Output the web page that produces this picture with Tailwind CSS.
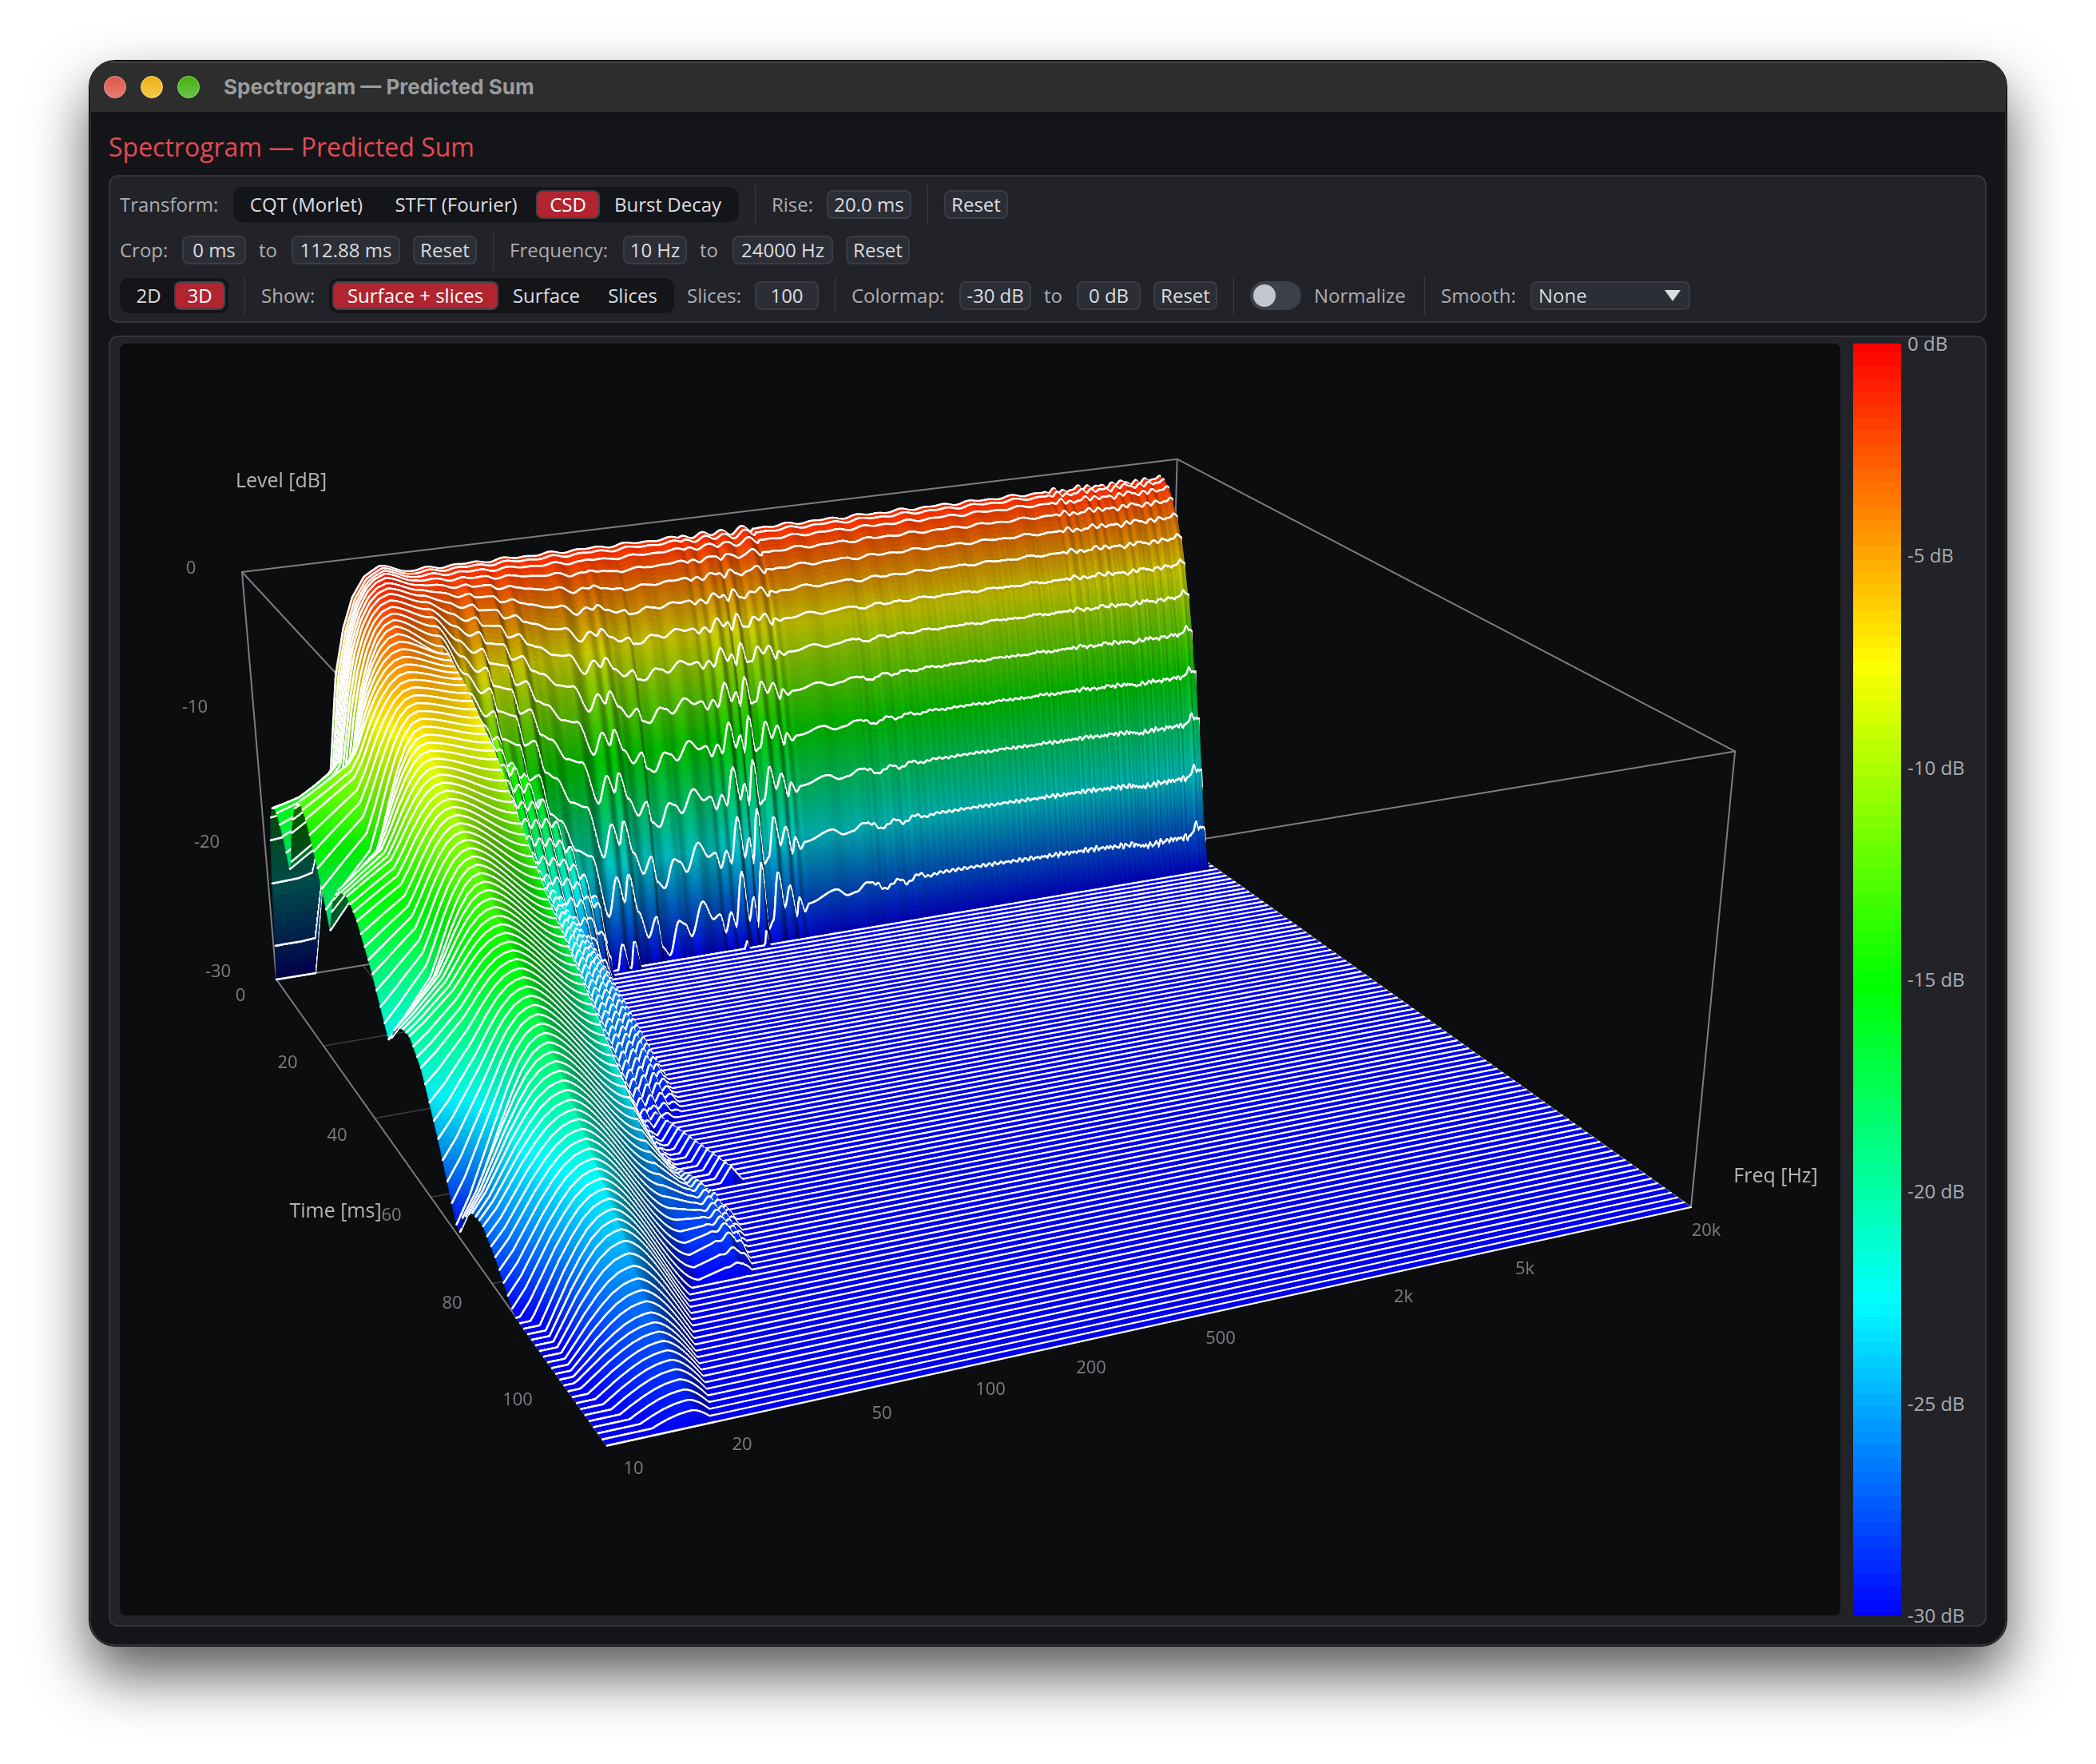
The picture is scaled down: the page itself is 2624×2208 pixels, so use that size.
<!DOCTYPE html>
<html lang="en">
<head>
  <meta charset="UTF-8" />
  <meta name="viewport" content="width=device-width, initial-scale=1.0" />
  <title>Spectrogram — Predicted Sum</title>
  <script src="https://cdn.jsdelivr.net/npm/@tailwindcss/browser@4"></script>
</head>
<body class="bg-white">

  <div class="flex flex-col h-screen px-[112px] pt-[76px] pb-[148px] font-['Open_Sans','Noto_Sans',sans-serif] text-[24px] leading-[32px] text-[#acadb1]">
    <!-- Window -->
    <div class="flex-1 min-h-0 flex flex-col rounded-[32px] overflow-hidden bg-[#141519] border-2 border-[#2e2f32] outline outline-1 outline-black shadow-[0_36px_72px_rgba(0,0,0,0.66)]">

      <!-- Title bar -->
      <div class="h-[62px] shrink-0 bg-[#2d2d2d] border-t border-[#454745] flex items-center pl-4 pb-[2px]">
        <div class="flex gap-[18px]">
          <button aria-label="Close" class="size-7 rounded-full bg-linear-to-b from-[#e0574a] to-[#e47a70] border border-[#f0a098]"></button>
          <button aria-label="Minimize" class="size-7 rounded-full bg-linear-to-b from-[#f0b100] to-[#f3c94a] border border-[#ffe27a]"></button>
          <button aria-label="Zoom" class="size-7 rounded-full bg-linear-to-b from-[#45b000] to-[#6cc346] border border-[#8fe070]"></button>
        </div>
        <div class="ml-[30px] font-['Inter'] font-bold text-[26px] text-[#9c9c9c]">Spectrogram — Predicted Sum</div>
      </div>

      <div class="flex-1 min-h-0 flex flex-col pl-[22px] pr-[23px] pb-[22px]">
        <h1 class="h-[79px] shrink-0 pt-5 text-[32px] leading-[48px] text-[#e24b55]">Spectrogram — Predicted Sum</h1>

        <!-- Controls -->
        <div class="shrink-0 flex flex-col gap-2 rounded-xl border-2 border-[#34353c] bg-[#222328] px-3 pt-[10px] pb-2">
          <div class="flex items-center gap-4 h-[49px]">
            <span class="w-[126px] whitespace-nowrap">Transform:</span>
            <div class="flex items-center h-11 p-1 rounded-[12px] bg-[#141519] text-[#dcdde0]">
              <button class="w-[175px] h-9 whitespace-nowrap">CQT (Morlet)</button>
              <button class="w-[200px] h-9 whitespace-nowrap">STFT (Fourier)</button>
              <button class="w-20 h-9 whitespace-nowrap rounded-lg border-2 border-[#3f424b] bg-[#b0252f] text-white leading-[30px]">CSD</button>
              <button class="w-[170px] h-9 whitespace-nowrap">Burst Decay</button>
            </div>
            <div class="w-px h-12 mx-1 bg-[#3a3b43]"></div>
            <label for="rise" class="w-[53px] whitespace-nowrap">Rise:</label>
            <input id="rise" type="text" value="20.0 ms" class="w-[106px] h-9 rounded-lg border-2 border-[#3a3c45] bg-[#2c2e36] text-center text-[#dcdde0]" />
            <div class="w-px h-12 mx-1 bg-[#3a3b43]"></div>
            <button class="w-20 h-9 rounded-lg border-2 border-[#3a3c45] bg-[#2c2e36] text-[#dcdde0] leading-[30px]">Reset</button>
          </div>

          <div class="flex items-center gap-4 h-[49px]">
            <label for="crop-from" class="w-[62px] whitespace-nowrap">Crop:</label>
            <input id="crop-from" type="text" value="0 ms" class="w-20 h-9 rounded-lg border-2 border-[#3a3c45] bg-[#2c2e36] text-center text-[#dcdde0]" />
            <label for="crop-to" class="w-[25px]">to</label>
            <input id="crop-to" type="text" value="112.88 ms" class="w-[136px] h-9 rounded-lg border-2 border-[#3a3c45] bg-[#2c2e36] text-center text-[#dcdde0]" />
            <button class="w-20 h-9 rounded-lg border-2 border-[#3a3c45] bg-[#2c2e36] text-[#dcdde0] leading-[30px]">Reset</button>
            <div class="w-px h-12 mx-1 bg-[#3a3b43]"></div>
            <label for="freq-from" class="w-[126px] whitespace-nowrap">Frequency:</label>
            <input id="freq-from" type="text" value="10 Hz" class="w-20 h-9 rounded-lg border-2 border-[#3a3c45] bg-[#2c2e36] text-center text-[#dcdde0]" />
            <label for="freq-to" class="w-[25px]">to</label>
            <input id="freq-to" type="text" value="24000 Hz" class="w-[126px] h-9 rounded-lg border-2 border-[#3a3c45] bg-[#2c2e36] text-center text-[#dcdde0]" />
            <button class="w-20 h-9 rounded-lg border-2 border-[#3a3c45] bg-[#2c2e36] text-[#dcdde0] leading-[30px]">Reset</button>
          </div>

          <div class="flex items-center gap-4 h-[49px]">
            <div class="flex items-center h-11 p-1 rounded-[12px] bg-[#141519] text-[#dcdde0]">
              <button class="w-16 h-9">2D</button>
              <button class="w-16 h-9 rounded-lg border-2 border-[#3f424b] bg-[#b0252f] text-white leading-[30px]">3D</button>
            </div>
            <div class="w-px h-12 mx-1 bg-[#3a3b43]"></div>
            <span class="w-[69px] whitespace-nowrap">Show:</span>
            <div class="flex items-center h-11 p-1 rounded-[12px] bg-[#141519] text-[#dcdde0]">
              <button class="w-[208px] h-9 whitespace-nowrap rounded-lg border-2 border-[#3f424b] bg-[#b0252f] text-white leading-[30px]">Surface + slices</button>
              <button class="w-[120px] h-9">Surface</button>
              <button class="w-24 h-9">Slices</button>
            </div>
            <label for="slices" class="w-[69px] whitespace-nowrap">Slices:</label>
            <input id="slices" type="text" value="100" class="w-20 h-9 rounded-lg border-2 border-[#3a3c45] bg-[#2c2e36] text-center text-[#dcdde0]" />
            <div class="w-px h-12 mx-1 bg-[#3a3b43]"></div>
            <label for="map-from" class="w-[119px] whitespace-nowrap">Colormap:</label>
            <input id="map-from" type="text" value="-30 dB" class="w-[90px] h-9 rounded-lg border-2 border-[#3a3c45] bg-[#2c2e36] text-center text-[#dcdde0]" />
            <label for="map-to" class="w-[25px]">to</label>
            <input id="map-to" type="text" value="0 dB" class="w-20 h-9 rounded-lg border-2 border-[#3a3c45] bg-[#2c2e36] text-center text-[#dcdde0]" />
            <button class="w-20 h-9 rounded-lg border-2 border-[#3a3c45] bg-[#2c2e36] text-[#dcdde0] leading-[30px]">Reset</button>
            <div class="w-px h-12 mx-1 bg-[#3a3b43]"></div>
            <input id="normalize" type="checkbox" class="appearance-none relative w-16 h-9 rounded-full bg-[#3c4048] before:absolute before:left-1 before:top-1 before:size-7 before:rounded-full before:bg-[#c3c6d0]" />
            <label for="normalize" class="w-[118px] whitespace-nowrap">Normalize</label>
            <div class="w-px h-12 mx-1 bg-[#3a3b43]"></div>
            <label for="smooth" class="w-[96px] whitespace-nowrap">Smooth:</label>
            <div class="relative w-[200px] h-9">
              <select id="smooth" class="appearance-none w-full h-9 pl-2 rounded-lg border-2 border-[#3a3c45] bg-[#2c2e36] text-[#dcdde0] leading-[30px]">
                <option>None</option>
              </select>
              <svg class="absolute right-3 top-[11px] w-5 h-[14px] pointer-events-none" viewBox="0 0 20 14"><path d="M0 0H20L10 14Z" fill="#dcdde0" /></svg>
            </div>
          </div>
        </div>

        <!-- Plot -->
        <div class="flex-1 min-h-0 mt-4 flex rounded-xl border-2 border-[#34353c] bg-[#222328] pl-3 pt-2 pb-3 pr-[13px]">
          <div class="relative flex-1 rounded-lg overflow-hidden bg-[#0c0d0f]">
            <canvas id="plot" width="2154" height="1592" class="block absolute inset-0 w-full h-full"></canvas>
            <svg class="absolute inset-0 w-full h-full" viewBox="0 0 2154 1592" preserveAspectRatio="none" text-anchor="middle">
              <g fill="#7c7d83" font-size="22">
                <text x="89" y="288">0</text>
                <text x="94" y="462">-10</text>
                <text x="109" y="631">-20</text>
                <text x="123" y="793">-30</text>
                <text x="151" y="823">0</text>
                <text x="210" y="907">20</text>
                <text x="272" y="998">40</text>
                <text x="340" y="1098">60</text>
                <text x="416" y="1208">80</text>
                <text x="498" y="1329">100</text>
                <text x="643" y="1415">10</text>
                <text x="779" y="1385">20</text>
                <text x="954" y="1346">50</text>
                <text x="1090" y="1316">100</text>
                <text x="1216" y="1289">200</text>
                <text x="1378" y="1252">500</text>
                <text x="1607" y="1200">2k</text>
                <text x="1759" y="1165">5k</text>
                <text x="1986" y="1117">20k</text>
              </g>
              <g fill="#b4b5b9" font-size="25">
                <text x="202" y="180">Level [dB]</text>
                <text x="270" y="1094">Time [ms]</text>
                <text x="2073" y="1050">Freq [Hz]</text>
              </g>
            </svg>
          </div>

          <!-- Color bar -->
          <canvas id="bar" width="60" height="1592" class="ml-4 w-[60px] h-full"></canvas>
          <div class="ml-2 w-[84px] flex flex-col justify-between whitespace-nowrap">
            <div class="h-0 flex items-center">0 dB</div>
            <div class="h-0 flex items-center">-5 dB</div>
            <div class="h-0 flex items-center">-10 dB</div>
            <div class="h-0 flex items-center">-15 dB</div>
            <div class="h-0 flex items-center">-20 dB</div>
            <div class="h-0 flex items-center">-25 dB</div>
            <div class="h-0 flex items-center">-30 dB</div>
          </div>
        </div>
      </div>
    </div>
  </div>

  <script>
    // value table lookup, linear between the points or eased when smooth is set
    function lut(tab, x, smooth) {
      if (x <= tab[0][0]) return tab[0][1];
      for (let i = 1; i < tab.length; i++) {
        if (x <= tab[i][0]) {
          const a = tab[i - 1], b = tab[i];
          let w = (x - a[0]) / (b[0] - a[0]);
          if (smooth) w = w * w * (3 - 2 * w);
          return a[1] + (b[1] - a[1]) * w;
        }
      }
      return tab[tab.length - 1][1];
    }

    // h: 0 = -30 dB, 1 = 0 dB
    function color(h, s) {
      const v = Math.max(0, Math.min(1, h)) * 4;
      let r = 0, g = 0, b = 0;
      if (v < 1) { g = v; b = 1; }
      else if (v < 2) { g = 1; b = 2 - v; }
      else if (v < 3) { g = 1; r = v - 2; }
      else { r = 1; g = 4 - v; }
      s *= 255;
      return `rgb(${r * s | 0},${g * s | 0},${b * s | 0})`;
    }

    // level at 10 Hz over time
    const EDGE = [[0,.48],[.0585,.48],[.08,.43],[.102,.35],[.115,.46],[.135,.54],[.159,.578],[.18,.55],[.21,.46],[.241,.3385],
      [.255,.42],[.28,.47],[.311,.485],[.34,.46],[.38,.38],[.4276,.25],[.45,.31],[.475,.33],[.4977,.3345],[.53,.29],[.57,.17],[.616,0],
      [.63,.06],[.66,.105],[.688,.114],[.72,.08],[.769,0],[.8,-.06],[.85,-.04],[.9,-.01],[.95,-.03],[1,-.05]];
    // main resonance
    const CREST_F = [[0,.136],[.1,.117],[.27,.096],[.53,.09],[.77,.081],[1,.074]];
    const CREST_H = [[0,.975],[.03,.975],[.06,.955],[.27,.75],[.5256,.5],[.767,.25],[.82,.195],[.86,.135],[.89,.1],[.95,.055],[.99,.02],[1,0]];
    const G_EARLY = [[0,0],[.2,0],[.53,.09],[.63,.52],[.7,.73],[.78,.87],[.86,.95],[.93,.985],[1,1]];
    const G_MID = [[0,0],[.22,.15],[.45,.3],[.54,.45],[.65,.65],[.75,.81],[.84,.92],[.92,.98],[1,1]];
    const G_LATE = [[0,0],[.15,.16],[.3,.37],[.45,.58],[.6,.76],[.72,.88],[.84,.96],[.93,.99],[1,1]];
    const START = [[0,0],[.04,0],[.071,.5],[.083,.73],[.094,.84],[.105,.91],[.118,.955],[.133,.975]];
    const RISE = [[0,0],[.009,.2],[.018,.55],[.027,.79],[.036,.92],[.045,.98],[.0585,1]];

    // level of slice 12 over frequency
    const H12 = [[.16,.86],[.185,.74],[.2,.68],[.208,.69],[.215,.62],[.232,.6],[.24,.51],[.25,.52],[.26,.42],[.27,.4],[.285,.32],[.3,.3],[.316,.14],[.3255,.237],
      [.333,.17],[.338,.24],[.347,.14],[.357,.07],[.366,.12],[.371,.04],[.379,.015],[.39,.1],[.396,.09],[.403,.055],[.4159,.14],
      [.427,.09],[.434,.1],[.44,.05],[.4463,.1],[.4513,.06],[.4586,.2],[.466,.07],[.471,.13],[.475,.05],[.48,.215],[.487,.04],[.492,.06],[.498,.185],[.505,.09],
      [.511,.145],[.518,.06],[.521,.11],[.527,.07],[.532,.09],[.562,.115],[.575,.095],[.585,.1],[.596,.12],[.607,.113],[.616,.095],[.633,.115],[.641,.1],
      [.655,.12],[.665,.11],[.68,.115],[.7,.115],[.85,.11],[.9,.105],[.92,.095],[.95,.1],[.972,.1],[.978,.13],[.983,.12]];

    // decay after slice 12 between 50 and 100 Hz
    const TT = [.107,.18,.27,.4,.5,.6,.68,.75,.8,.9,1];
    const TAIL = [
      [.16, [.86,.81,.71,.5,.38,.25,.14,.04,-.04,-.15,-.22]],
      [.185,[.74,.6,.45,.28,.17,.1,.09,.06,-.03,-.15,-.2]],
      [.2,  [.68,.47,.33,.2,.08,.04,.09,.07,-.03,-.1,-.12]],
      [.215,[.62,.38,.26,.13,.01,.0,.04,.0,-.05,-.1,-.12]],
      [.25, [.52,.22,.17,.07,-.03,-.03,-.05,-.06,-.08,-.1,-.12]],
      [.275,[.38,.12,.06,-.01,-.02,-.04,-.05,-.06,-.08,-.1,-.12]],
      [.3,  [.3,-.2,-.3,-.3,-.3,-.3,-.3,-.3,-.3,-.3,-.3]],
      [.31, [.2,-.4,-.4,-.4,-.4,-.4,-.4,-.4,-.4,-.4,-.4]],
    ].map(([f, row]) => [f, row.map((v, i) => [TT[i], v])]);

    // the first slices lie a little closer together
    const STEP = .0089;
    function sliceTime(k) {
      return k <= 12 ? k * STEP : 12 * STEP + (k - 12) * (1 - 12 * STEP) / 87;
    }

    function wall(f, t) {
      const end = .98 + Math.min(1, t / .107) * .009;
      if (f > end + .003) return 0;
      if (f > end) return wall(end - .001, t) * (end + .003 - f) / .003;
      const hf = Math.max(0, (f - .66) / .34);
      const top = .956 + .002 * Math.sin(f * 150) + .002 * Math.sin(f * 251)
        + (f > .84 ? .006 * Math.sin(f * 560) * Math.sin(f * 97) : 0)
        + (f > .44 && f < .52 ? .006 * Math.sin(f * 300) : 0);
      const n = .003 * Math.sin(f * 900) * (f > .6 ? 1 : 0) + .009 * hf * Math.sin(f * 1270) * Math.sin(f * 210);
      let h = top - (top + .01 - lut(H12, f, true) - n) * Math.pow(t / STEP / 12, 2.2);
      if (f < .31 && t > .107) {
        let i = 1;
        while (i < TAIL.length - 1 && TAIL[i][0] < f) i++;
        const a = TAIL[i - 1], b = TAIL[i];
        const w = Math.max(0, (f - a[0]) / (b[0] - a[0]));
        const v = lut(a[1], t) * (1 - w) + lut(b[1], t) * w;
        const tail = v + Math.max(0, Math.min(.02, v * .4)) * Math.sin(f * 480 + t * 20) * Math.min(1, Math.max(0, (f - .18) / .04));
        const m = Math.min(1, (t - .107) / .02);
        h = h * (1 - m) + tail * m;
        // narrow late ridge
        if (t > .42 && t < .61) {
          const d = Math.abs(f - .22 - (t - .42) * .17) / .01;
          h = Math.max(h, .035 * (1 - d));
        }
      }
      return h;
    }

    function level(f, t) {
      const fc = lut(CREST_F, t), c = lut(CREST_H, t);
      let h;
      if (f < fc) {
        const u = f / fc, e = lut(EDGE, t);
        const m = Math.min(1, t / .2), m2 = Math.max(0, Math.min(1, (t - .35) / .3));
        const g = lut(G_EARLY, u) * (1 - m) + lut(G_MID, u) * m;
        h = e + (c - e) * (g * (1 - m2) + lut(G_LATE, u) * m2);
        if (t < .0585) {
          const r = lut(RISE, t);
          h = lut(START, f) * (1 - r) + h * r;
        }
      } else if (f < .16) {
        const v = (f - fc) / (.16 - fc);
        h = c + (wall(.16, t) - c) * (.8 * v * v * (3 - 2 * v) + .2 * v);
      } else {
        h = wall(f, t);
      }
      return Math.max(0, h);
    }

    // box coordinates (freq, time, level in 0..1) to plot pixels
    function project(f, t, h) {
      const w = 1 + .1025 * f - .228 * t - .0488 * h;
      return [
        (346 + 1264.6 * f + 240.7 * t - 57.8 * h) / w - 150,
        (1226 - 75.5 * f + 170.9 * t - 544.9 * h) / w - 430,
      ];
    }

    function shade(dhdf, dhdt) {
      const nx = -dhdf * .4, nz = -dhdt * .6;
      const len = Math.hypot(nx, 1, nz);
      const d = (-.45 * nx + .85 + .38 * nz) / len;
      return Math.max(.3, Math.min(1, .3 + .75 * d));
    }

    function drawPlot() {
      const ctx = document.getElementById("plot").getContext("2d");
      ctx.lineJoin = "round";
      ctx.lineCap = "round";

      function line(...pts) {
        ctx.beginPath();
        pts.forEach(p => ctx.lineTo(...project(...p)));
        ctx.stroke();
      }

      // floor grid
      ctx.strokeStyle = "#3c3d42";
      ctx.lineWidth = 1.5;
      [20, 40, 60, 80, 100].forEach(ms => line([0, ms / 112.88, 0], [1, ms / 112.88, 0]));
      [20, 50, 100, 200, 500, 2000, 5000].forEach(hz => {
        const f = Math.log(hz / 10) / Math.log(2400);
        line([f, 0, 0], [f, 1, 0]);
      });

      // bounding box
      ctx.strokeStyle = "#7c7d84";
      ctx.lineWidth = 2;
      line([0, 0, 0], [1, 0, 0], [1, 1, 0], [0, 1, 0], [0, 0, 0]);
      line([0, 0, 1], [1, 0, 1], [1, 1, 1], [0, 1, 1], [0, 0, 1]);
      [[0, 0], [1, 0], [1, 1], [0, 1]].forEach(([f, t]) => line([f, t, 0], [f, t, 1]));

      // surface and slices, back to front
      const N = 800, K = 99;
      const rows = [];
      for (let k = 0; k <= K; k++) {
        const row = [];
        for (let i = 0; i <= N; i++) row.push(level(i / N, sliceTime(k)));
        rows.push(row);
      }

      for (let k = 0; k < K; k++) {
        const a = rows[k], b = rows[k + 1], t0 = sliceTime(k), t1 = sliceTime(k + 1);
        let flat = N;
        while (flat > 0 && a[flat - 1] === 0 && b[flat - 1] === 0) flat--;
        if (flat < N) {
          const f = flat / N;
          ctx.fillStyle = color(0, .93);
          ctx.beginPath();
          [[f, t0, 0], [1, t0, 0], [1, t1, 0], [f, t1, 0]].forEach(p => ctx.lineTo(...project(...p)));
          ctx.fill();
          ctx.strokeStyle = "#fff";
          ctx.lineWidth = 2.2;
          line([f, t0, 0], [1, t0, 0]);
          line([f, t1, 0], [1, t1, 0]);
        }
        for (let i = flat - 1; i >= 0; i--) {
          const f0 = i / N, f1 = (i + 1) / N;
          const s = shade((a[i + 1] - a[i] + b[i + 1] - b[i]) * N / 2, (b[i] - a[i] + b[i + 1] - a[i + 1]) / (t1 - t0) / 2);
          const n = 1 + Math.floor(Math.max(Math.abs(a[i] - b[i]), Math.abs(a[i + 1] - b[i + 1])) / .012);
          for (let j = 0; j < n; j++) {
            const u = j / n, v = (j + 1) / n;
            const tu = t0 + (t1 - t0) * u, tv = t0 + (t1 - t0) * v;
            const hu0 = a[i] + (b[i] - a[i]) * u, hu1 = a[i + 1] + (b[i + 1] - a[i + 1]) * u;
            const hv0 = a[i] + (b[i] - a[i]) * v, hv1 = a[i + 1] + (b[i + 1] - a[i + 1]) * v;
            ctx.fillStyle = ctx.strokeStyle = color((hu0 + hu1 + hv0 + hv1) / 4, s);
            ctx.lineWidth = .8;
            ctx.beginPath();
            ctx.moveTo(...project(f0, tu, hu0));
            ctx.lineTo(...project(f1, tu, hu1));
            ctx.lineTo(...project(f1, tv, hv1));
            ctx.lineTo(...project(f0, tv, hv0));
            ctx.closePath();
            ctx.fill();
            ctx.stroke();
          }
          ctx.strokeStyle = "#fff";
          ctx.lineWidth = 2.5;
          line([f0, t0, a[i]], [f1, t0, a[i + 1]]);
          line([f0, t1, b[i]], [f1, t1, b[i + 1]]);
        }
      }
    }

    function drawBar() {
      const ctx = document.getElementById("bar").getContext("2d");
      for (let i = 0; i < 100; i++) {
        ctx.fillStyle = color(1 - i / 99, 1);
        ctx.fillRect(0, i * 16.08 - 4, 60, 17);
      }
    }

    drawPlot();
    drawBar();
  </script>

</body>
</html>
